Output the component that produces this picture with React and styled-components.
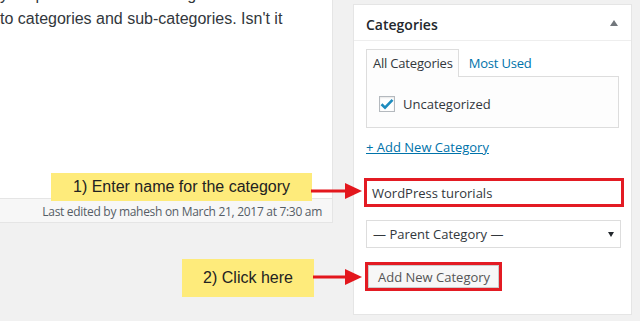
import React from 'react';
import styled, { createGlobalStyle } from 'styled-components';

const GlobalStyle = createGlobalStyle`
  html, body {
    margin: 0;
    padding: 0;
    background: #f1f1f1;
  }
`;

const Screen = styled.div`
  position: relative;
  width: 640px;
  height: 321px;
  overflow: hidden;
  background: #f1f1f1;
  display: flex;
  align-items: flex-start;
  gap: 20px;
  font-family: 'Open Sans', 'Noto Sans', sans-serif;
`;

const Editor = styled.div`
  width: 332px;
  display: flex;
  flex-direction: column;
  background: #fff;
  border-right: 1px solid #e5e5e5;
  border-bottom: 1px solid #e5e5e5;
`;

const EditorBody = styled.div`
  height: 198px;
  overflow: hidden;
`;

const Paragraph = styled.p`
  margin: -17px 0 0 0;
  font-family: 'Liberation Sans', Arial, sans-serif;
  font-size: 16px;
  line-height: 24px;
  color: #32373c;
  white-space: nowrap;
`;

const EditorFooter = styled.div`
  height: 24px;
  box-sizing: border-box;
  padding: 2px 10px 0 0;
  background: #f7f7f7;
  border-top: 1px solid #e5e5e5;
  display: flex;
  align-items: center;
  justify-content: flex-end;
  font-size: 12px;
  color: #555d66;
  letter-spacing: -0.3px;
`;

const Box = styled.div`
  margin-top: 4px;
  width: 277px;
  height: 309px;
  background: #fff;
  border: 1px solid #e5e5e5;
  display: flex;
  flex-direction: column;
`;

const BoxHeader = styled.div`
  height: 36px;
  box-sizing: border-box;
  padding: 3px 13px 0 12px;
  border-bottom: 1px solid #eee;
  display: flex;
  align-items: center;
  justify-content: space-between;
  font-size: 14px;
  font-weight: 600;
  color: #23282d;
`;

const Toggle = styled.span`
  width: 0;
  height: 0;
  margin-top: -3px;
  border-left: 4px solid transparent;
  border-right: 4px solid transparent;
  border-bottom: 6px solid #72777c;
`;

const BoxBody = styled.div`
  padding: 8px 12px 0 12px;
  display: flex;
  flex-direction: column;
`;

const Tabs = styled.div`
  display: flex;
  align-items: flex-end;
  font-size: 13px;
  letter-spacing: -0.2px;
`;

const Tab = styled.div`
  height: 28px;
  box-sizing: border-box;
  display: flex;
  align-items: center;
  padding: 0 5px 1px 6px;
  margin-bottom: -1px;
  position: relative;
  color: ${(p) => (p.active ? '#32373c' : '#0073aa')};
  background: ${(p) => (p.active ? '#fdfdfd' : 'transparent')};
  border: 1px solid ${(p) => (p.active ? '#dddddd' : 'transparent')};
  border-bottom: none;
  padding-left: ${(p) => (p.active ? '6px' : '9px')};
`;

const TabPanel = styled.div`
  height: 52px;
  box-sizing: border-box;
  padding: 3px 0 0 12px;
  border: 1px solid #dddddd;
  background: #fdfdfd;
  display: flex;
  align-items: center;
  font-size: 13px;
  color: #32373c;
  gap: 8px;
`;

const Check = styled.span`
  width: 14px;
  height: 14px;
  border: 1px solid #b4b9be;
  background: #fff;
  display: grid;
  place-items: center;
  box-shadow: inset 0 1px 2px rgba(0, 0, 0, 0.1);
`;

const AddLink = styled.a`
  margin-top: 10px;
  font-size: 13px;
  color: #0073aa;
  text-decoration: underline;
  line-height: 18px;
`;

const Form = styled.div`
  margin-top: 22px;
  display: flex;
  flex-direction: column;
  align-items: flex-start;
`;

const NameInput = styled.div`
  width: 249px;
  height: 23px;
  margin-left: -2px;
  border: 3px solid #e31b23;
  background: #fff;
  display: flex;
  align-items: center;
  padding-left: 5px;
  font-size: 13px;
  color: #32373c;
`;

const Select = styled.div`
  margin-top: 13px;
  width: 241px;
  height: 26px;
  border: 1px solid #dddddd;
  display: flex;
  align-items: center;
  justify-content: space-between;
  padding: 0 6px 0 6px;
  font-size: 13px;
  color: #32373c;
`;

const Caret = styled.span`
  width: 0;
  height: 0;
  border-left: 3px solid transparent;
  border-right: 3px solid transparent;
  border-top: 5px solid #23282d;
`;

const ButtonFrame = styled.div`
  margin-top: 14px;
  margin-left: -1px;
  border: 3px solid #e31b23;
`;

const Button = styled.div`
  height: 21px;
  padding: 0 8px 0 9px;
  border: 1px solid #ccc;
  background: #f7f7f7;
  display: flex;
  align-items: center;
  font-size: 13px;
  color: #555;
`;

const Callout = styled.div`
  position: absolute;
  left: ${(p) => p.x}px;
  top: ${(p) => p.y}px;
  width: ${(p) => p.w}px;
  height: ${(p) => p.h}px;
  background: #feeb7b;
  display: flex;
  align-items: center;
  justify-content: center;
  font-family: 'Liberation Sans', Arial, sans-serif;
  font-size: 16px;
  color: #222;
`;

const Arrow = styled.svg`
  position: absolute;
  left: ${(p) => p.x}px;
  top: ${(p) => p.y}px;
`;

function RedArrow({ x, y, length }) {
  return (
    <Arrow x={x} y={y - 8} width={length} height={16} viewBox={`0 0 ${length} 16`}>
      <rect x="0" y="6.5" width={length - 14} height="3" fill="#e3171d" />
      <polygon points={`${length - 17},0 ${length},8 ${length - 17},16`} fill="#e3171d" />
    </Arrow>
  );
}

export default function App() {
  return (
    <>
      <GlobalStyle />
      <Screen>
        <Editor>
          <EditorBody>
            <Paragraph>
              your posts in different categories. In this
              <br />
              to categories and sub-categories. Isn't it
            </Paragraph>
          </EditorBody>
          <EditorFooter>Last edited by mahesh on March 21, 2017 at 7:30 am</EditorFooter>
        </Editor>

        <Box>
          <BoxHeader>
            Categories
            <Toggle />
          </BoxHeader>
          <BoxBody>
            <Tabs>
              <Tab active>All Categories</Tab>
              <Tab>Most Used</Tab>
            </Tabs>
            <TabPanel>
              <Check>
                <svg width="14" height="12" viewBox="0 0 14 12">
                  <path d="M1.5 6.2 L5 9.6 L12.5 1.8" fill="none" stroke="#1e8cbe" strokeWidth="2.6" />
                </svg>
              </Check>
              Uncategorized
            </TabPanel>
            <AddLink>+ Add New Category</AddLink>
            <Form>
              <NameInput>WordPress turorials</NameInput>
              <Select>
                — Parent Category —
                <Caret />
              </Select>
              <ButtonFrame>
                <Button>Add New Category</Button>
              </ButtonFrame>
            </Form>
          </BoxBody>
        </Box>

        <Callout x={51} y={173} w={261} h={28}>1) Enter name for the category</Callout>
        <RedArrow x={311} y={191} length={51} />
        <Callout x={182} y={259} w={132} h={38}>2) Click here</Callout>
        <RedArrow x={313} y={277} length={49} />
      </Screen>
    </>
  );
}
